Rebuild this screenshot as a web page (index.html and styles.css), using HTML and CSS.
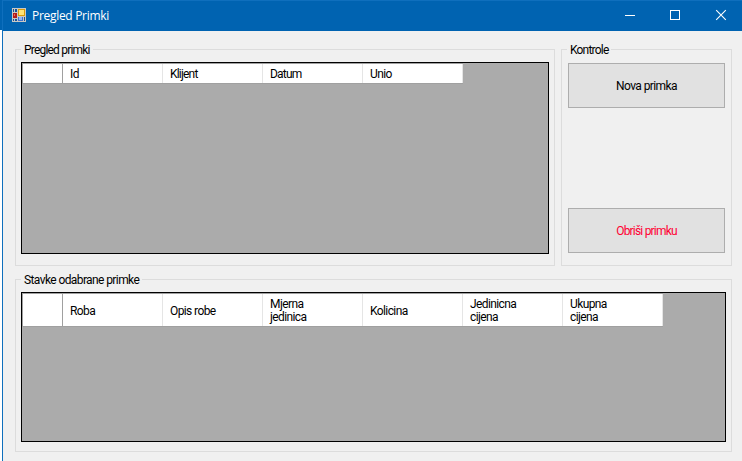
FILE: index.html
```html
<!DOCTYPE html>
<html lang="hr">
<head>
<meta charset="utf-8">
<title>Pregled Primki</title>
<link rel="stylesheet" href="styles.css">
</head>
<body>
<div class="window">
  <header class="titlebar">
    <svg class="app-icon" width="14" height="14" viewBox="0 0 14 14" shape-rendering="crispEdges">
      <path fill="#c9c8c4" d="M0 0h14v14H0z"/>
      <path fill="#17549a" d="M1 1h1v3H1zM3 1h2v3H3zM1 11h1v2H1zM3 11h2v2H3z"/>
      <path fill="#b31b1b" d="M1 5h4v5H1z"/><path fill="#e46c60" d="M2 6h1v2H2z"/>
      <path fill="#d99b08" d="M6 1h7v7H6z"/><path fill="#ffe477" d="M7 2h5v5H7z"/>
      <path fill="#3e72cf" d="M6 9h5v4H6z"/><path fill="#91b7f4" d="M7 9h3v3H7z"/>
      <path fill="#17549a" d="M12 9h1v4h-1z"/>
    </svg>
    <h1 class="title">Pregled Primki</h1>
    <svg class="caption-buttons" width="112" height="30" viewBox="0 0 112 30" fill="none" stroke="#fff">
      <path d="M5 15.500h10M50.500 10.500h9v9h-9z" shape-rendering="crispEdges"/>
      <path d="M96.200 10.200l9.600 9.600M105.800 10.200l-9.600 9.600" stroke-width="1.100"/>
    </svg>
  </header>
  <main class="content">
    <div class="upper">
      <section class="group receipts">
        <h2 class="legend tight">Pregled primki</h2>
        <div class="grid">
          <div class="header-row">
            <span class="corner"></span><span class="col">Id</span><span class="col tight">Klijent</span><span class="col tight">Datum</span><span class="col">Unio</span>
          </div>
        </div>
      </section>
      <section class="group controls">
        <h2 class="legend tight">Kontrole</h2>
        <button class="button">Nova primka</button>
        <button class="button danger tight">Obriši primku</button>
      </section>
    </div>
    <section class="group items">
      <h2 class="legend">Stavke odabrane primke</h2>
      <div class="grid">
        <div class="header-row tall">
          <span class="corner"></span><span class="col">Roba</span><span class="col">Opis robe</span><span class="col">Mjerna<br>jedinica</span><span class="col">Kolicina</span><span class="col">Jedinicna<br>cijena</span><span class="col">Ukupna<br>cijena</span>
        </div>
      </div>
    </section>
  </main>
</div>
</body>
</html>
```
FILE: styles.css
```css
* { box-sizing: border-box; }

body {
  margin: 0;
  width: 742px;
  height: 461px;
  overflow: hidden;
  background: linear-gradient(#0063b1 30px, #fff 30px);
  font: 12px/13px Roboto, "Liberation Sans", sans-serif;
  letter-spacing: -0.6px;
  color: #000;
}

h1, h2 { margin: 0; font: inherit; }

.window {
  height: 461px;
  margin-left: 2px;
  border-left: 1px solid #0f6fbd;
  background: #f0f0f0;
}

.titlebar {
  display: flex;
  height: 31px;
  padding-left: 9px;
  border-top: 1px solid #0f6fbd;
  background: #0063b1;
  color: #fff;
}

.app-icon { margin-top: 7px; }

.title {
  flex: 1;
  margin-left: 6px;
  padding-top: 7px;
  font: 12px/15px "Open Sans", sans-serif;
  letter-spacing: -0.3px;
}

.caption-buttons { margin-right: 10px; margin-top: -1px; }

.content {
  display: flex;
  flex-direction: column;
  gap: 13px;
  padding: 18px 10px 9px 12px;
}

.upper { display: flex; gap: 6px; height: 217px; }

.group {
  display: flex;
  flex-direction: column;
  border: 1px solid #dcdcdc;
  padding: 0 5px 11px;
}

.receipts { width: 540px; }
.controls { width: 171px; padding: 0 6px 12px; }
.items { height: 173px; padding-bottom: 9px; }

.legend {
  align-self: flex-start;
  height: 13px;
  margin: -6px 0 5px;
  padding: 0 3px;
  background: #f0f0f0;
  white-space: nowrap;
}

.controls .legend { margin-bottom: 6px; margin-left: -1px; }

.grid {
  flex: 1;
  border: 1px solid #000;
  background: #ababab;
}

.header-row {
  display: flex;
  width: max-content;
  height: 21px;
  border: 1px solid #a0a0a0;
  border-right: 0;
  background: #fff;
}

.header-row.tall { height: 34px; }

.corner { width: 40px; border-right: 1px solid #a0a0a0; }

.col {
  display: flex;
  align-items: center;
  width: 100px;
  padding: 2px 0 0 7px;
  border-right: 1px solid #e5e5e5;
}

.button {
  height: 45px;
  padding: 2px 0 0;
  border: 1px solid #adadad;
  background: #e1e1e1;
  color: #000;
  font: inherit;
  letter-spacing: inherit;
}

.danger { margin-top: auto; color: #ff0033; }

.tight { letter-spacing: -0.8px; }
```
